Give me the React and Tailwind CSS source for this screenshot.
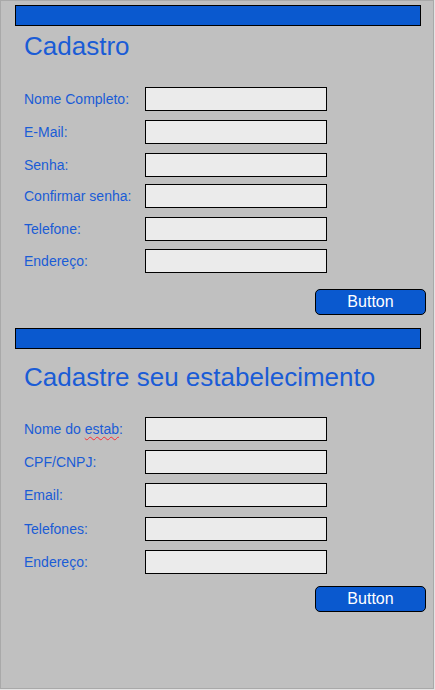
import React from "react";

const font = {fontFamily: "'Liberation Sans', Arial, sans-serif"};

const cadastroFields = [
	{label: "Nome Completo:", gap: "mt-[26px]"},
	{label: "E-Mail:", gap: "mt-[9px]"},
	{label: "Senha:", gap: "mt-[9px]"},
	{label: "Confirmar senha:", gap: "mt-[7px]"},
	{label: "Telefone:", gap: "mt-[9px]"},
	{label: "Endereço:", gap: "mt-[8px]"},
];

const estabFields = [
	{label: "Nome do estab:", gap: "mt-[25px]", squiggle: true},
	{label: "CPF/CNPJ:", gap: "mt-[9px]"},
	{label: "Email:", gap: "mt-[9px]"},
	{label: "Telefones:", gap: "mt-[10px]"},
	{label: "Endereço:", gap: "mt-[9px]"},
];

function Field({label, gap, squiggle}) {
	return (
		<div className={`flex items-center ${gap}`}>
			<label className="ml-[9px] w-[121px] text-[14px] leading-[16px] text-[#1a5cd6]">
				{squiggle ? (
					<>
						Nome do <span className="underline decoration-wavy decoration-red-500 decoration-1 underline-offset-2">estab</span>:
					</>
				) : (
					label
				)}
			</label>
			<input type="text" className="w-[182px] h-[24px] bg-[#ebebeb] border border-black outline-none" />
		</div>
	);
}

function Section({title, fields, titleGap, buttonGap}) {
	return (
		<div>
			<div className="w-[406px] h-[21px] bg-[#0a59cf] border border-black"></div>
			<h1 className={`ml-[9px] ${titleGap} text-[26px] leading-[30px] text-[#1a5cd6]`}>{title}</h1>
			{fields.map((f, i) => (
				<Field key={i} {...f} />
			))}
			<div className={`w-[411px] flex justify-end ${buttonGap}`}>
				<button className="w-[111px] h-[26px] bg-[#0a59cf] border border-black rounded-[5px] text-white text-[16px] leading-[18px]">
					Button
				</button>
			</div>
		</div>
	);
}

export default function App() {
	return (
		<div className="w-[435px] h-[690px] bg-[#e4e4e4]" style={font}>
			<div className="w-[434px] h-[689px] bg-[#c0c0c0] border border-[#a9a9a9] pl-[14px] pt-[4px]">
				<Section title="Cadastro" fields={cadastroFields} titleGap="mt-[5px]" buttonGap="mt-[16px]" />
				<div className="mt-[13px]">
					<Section title="Cadastre seu estabelecimento" fields={estabFields} titleGap="mt-[13px]" buttonGap="mt-[12px]" />
				</div>
			</div>
		</div>
	);
}
